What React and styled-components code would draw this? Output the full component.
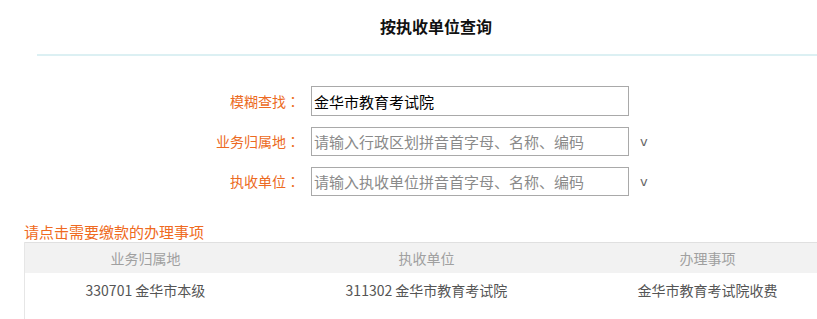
import React from "react";
import styled, { createGlobalStyle } from "styled-components";

const Global = createGlobalStyle`
  html, body { margin: 0; padding: 0; background: #fff; overflow: hidden; }
  body { font-family: "Noto Sans CJK SC", "Noto Sans", sans-serif; }
  * { box-sizing: border-box; }
`;

const Page = styled.div`
  width: 817px;
  height: 319px;
  overflow: hidden;
  position: relative;
`;

const Header = styled.div`
  margin-left: 37px;
  width: 798px;
  height: 56px;
  border-bottom: 2px solid #dcf0f3;
  display: flex;
  align-items: center;
  justify-content: center;
`;

const Title = styled.h1`
  margin: 0 0 2px 0;
  font-size: 16px;
  font-weight: 700;
  color: #111;
  line-height: 20px;
`;

const Form = styled.div`
  margin-top: 30px;
  display: flex;
  flex-direction: column;
  gap: 10px;
`;

const Row = styled.div`
  display: flex;
  align-items: center;
  height: 30px;
`;

const Label = styled.label`
  width: 300px;
  text-align: right;
  font-size: 14px;
  color: #ec6a22;
  white-space: nowrap;
`;

const Colon = styled.span`
  font-family: "Noto Sans CJK TC", "Noto Sans CJK SC", sans-serif;
`;

const Input = styled.input`
  margin-left: 11px;
  width: 318px;
  height: ${(p) => p.$h || 30}px;
  border: 1px solid #a9a9a9;
  padding: 0 2px;
  font-family: "Noto Sans CJK SC", sans-serif;
  font-size: 15px;
  color: #000;
  outline: none;
  &::placeholder { color: #8a8a8a; }
`;

const Chevron = styled.span`
  margin-left: 11px;
  font-family: "DejaVu Sans", sans-serif;
  font-size: 13px;
  color: #666;
  line-height: 1;
`;

const Section = styled.div`
  margin-top: 26px;
  padding-left: 24px;
`;

const SectionTitle = styled.div`
  font-size: 15px;
  line-height: 20px;
  color: #ef6a21;
`;

const Table = styled.div`
  width: 804px;
  border-left: 1px solid #e6e6e6;
  height: 80px;
`;

const HeadRow = styled.div`
  display: grid;
  grid-template-columns: 30% 40% 30%;
  height: 31px;
  background: #f2f2f2;
  border-top: 1px solid #e0e0e0;
  align-items: center;
`;

const BodyRow = styled.div`
  display: grid;
  grid-template-columns: 30% 40% 30%;
  height: 34px;
  align-items: center;
`;

const Cell = styled.div`
  text-align: center;
  font-size: 14px;
  color: ${(p) => (p.$head ? "#a0a0a0" : "#555")};
  white-space: nowrap;
`;

export default function App() {
  return (
    <>
      <Global />
      <Page>
        <Header>
          <Title>按执收单位查询</Title>
        </Header>
        <Form>
          <Row>
            <Label>模糊查找<Colon>：</Colon></Label>
            <Input defaultValue="金华市教育考试院" />
          </Row>
          <Row>
            <Label>业务归属地<Colon>：</Colon></Label>
            <Input $h={29} placeholder="请输入行政区划拼音首字母、名称、编码" />
            <Chevron>v</Chevron>
          </Row>
          <Row>
            <Label>执收单位<Colon>：</Colon></Label>
            <Input $h={29} placeholder="请输入执收单位拼音首字母、名称、编码" />
            <Chevron>v</Chevron>
          </Row>
        </Form>
        <Section>
          <SectionTitle>请点击需要缴款的办理事项</SectionTitle>
          <Table>
            <HeadRow>
              <Cell $head>业务归属地</Cell>
              <Cell $head>执收单位</Cell>
              <Cell $head>办理事项</Cell>
            </HeadRow>
            <BodyRow>
              <Cell>330701 金华市本级</Cell>
              <Cell>311302 金华市教育考试院</Cell>
              <Cell>金华市教育考试院收费</Cell>
            </BodyRow>
          </Table>
        </Section>
      </Page>
    </>
  );
}
